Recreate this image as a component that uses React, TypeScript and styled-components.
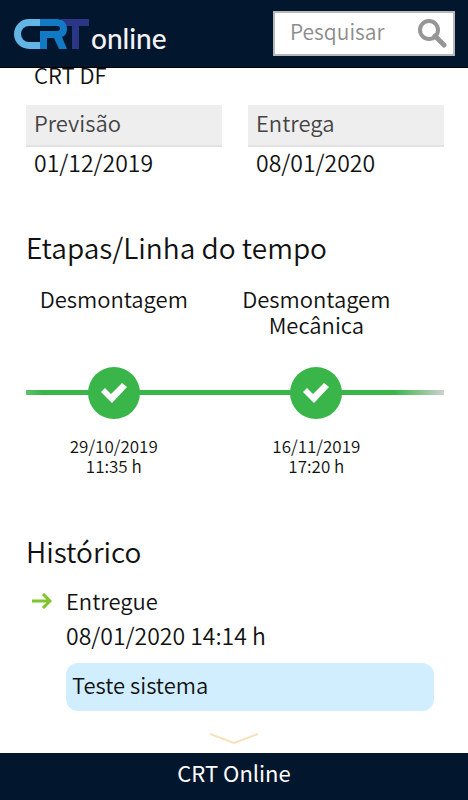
import styled, { createGlobalStyle } from 'styled-components'

const GlobalStyle = createGlobalStyle`
  * {
    box-sizing: border-box;
  }
  body {
    margin: 0;
    background: #fff;
    color: #111;
    font-family: 'Noto Sans CJK JP', 'Noto Sans', sans-serif;
    font-size: 22px;
    font-weight: 350;
  }
  h1, h2, h3, p, ol, ul, dl, dd {
    margin: 0;
    padding: 0;
    font-weight: inherit;
    list-style: none;
  }
`

const Page = styled.div`
  display: flex;
  flex-direction: column;
  min-height: 100vh;
`

const Header = styled.header`
  position: sticky;
  top: 0;
  z-index: 1;
  display: flex;
  align-items: center;
  justify-content: space-between;
  height: 68px;
  padding: 0 13px;
  background: #02162d;
  border-bottom: 1px solid #000;
`

const Brand = styled.a`
  display: flex;
  align-items: baseline;
  gap: 2px;
  padding-top: 6px;
  color: #f4f4f6;
  font-family: Lato, sans-serif;
  font-size: 28px;
  font-weight: 500;
  line-height: 34px;
  text-decoration: none;
`

const SearchBox = styled.form`
  display: flex;
  align-items: center;
  width: 182px;
  height: 45px;
  background: #fff;
  border: 2px solid #b8b8b8;
`

const SearchInput = styled.input`
  flex: 1;
  min-width: 0;
  height: 40px;
  padding: 0 0 6px 15px;
  border: 0;
  outline: 0;
  background: transparent;
  color: #444;
  font: inherit;
  font-size: 21px;

  &::placeholder {
    color: #8c8c8c;
    opacity: 1;
  }
`

const SearchButton = styled.button`
  display: flex;
  padding: 0 6px 2px 0;
  border: 0;
  background: transparent;
  cursor: pointer;
`

const Main = styled.main`
  flex: 1;
  padding: 0 24px 0 26px;
  overflow: hidden;
`

const Owner = styled.p`
  padding-left: 8px;
  line-height: 12px;
`

const Fields = styled.dl`
  display: grid;
  grid-template-columns: 1fr 1fr;
  gap: 26px;
  padding-top: 25px;
`

const FieldLabel = styled.dt`
  height: 42px;
  padding-left: 8px;
  background: #eee;
  border-bottom: 2px solid #e2e2e2;
  color: #444;
  line-height: 34px;
`

const FieldValue = styled.dd`
  padding-left: 8px;
  font-size: 23px;
  line-height: 30px;
`

const Section = styled.section`
  padding-top: 50px;
`

const SectionTitle = styled.h2`
  font-size: 28px;
  line-height: 40px;
`

const Timeline = styled.ol`
  display: grid;
  grid-template-columns: 42% 42%;
  grid-template-rows: auto auto auto;
  column-gap: 27px;
  padding: 18px 0 5px;
  text-align: center;
  background: linear-gradient(90deg, #5fc06c, #39b54a 4%, #39b54a 88%, #ccd2cd) 0 123px / 100% 5px no-repeat;
`

const Step = styled.li`
  display: grid;
  grid-row: span 3;
  grid-template-rows: subgrid;
  justify-items: center;
`

const StepName = styled.h3`
  font-size: 22px;
  line-height: 26px;
`

const StepMark = styled.span`
  display: flex;
  align-items: center;
  justify-content: center;
  width: 52px;
  height: 52px;
  margin: 30px 0 17px;
  border-radius: 50%;
  background: #39b54a;
`

const StepTime = styled.p`
  font-size: 17px;
  line-height: 20px;
`

const History = styled.ul`
  padding-top: 12px;
`

const HistoryItem = styled.li`
  display: flex;
  gap: 14px;
  padding: 0 10px 0 6px;
  line-height: 35px;
`

const ArrowSlot = styled.span`
  display: flex;
  align-items: center;
  height: 35px;
`

const HistoryBody = styled.div`
  flex: 1;
`

const HistoryDate = styled.p`
  font-size: 23px;
`

const Note = styled.p`
  height: 48px;
  margin-top: 10px;
  padding: 4px 6px;
  border-radius: 12px;
  background: #d0eeff;
`

const MoreButton = styled.button`
  align-self: center;
  display: flex;
  margin: 20px 0 8px;
  padding: 0;
  border: 0;
  background: transparent;
  cursor: pointer;
`

const Footer = styled.footer`
  height: 47px;
  background: #02162d;
  color: #fff;
  font-weight: 400;
  line-height: 38px;
  text-align: center;
`

const fields = [
  { label: 'Previsão', value: '01/12/2019' },
  { label: 'Entrega', value: '08/01/2020' },
]

const steps = [
  { name: 'Desmontagem', date: '29/10/2019', time: '11:35 h' },
  { name: 'Desmontagem Mecânica', date: '16/11/2019', time: '17:20 h' },
]

const history = [{ status: 'Entregue', when: '08/01/2020 14:14 h', note: 'Teste sistema' }]

const CrtMark = () => (
  <svg width="76" height="31" viewBox="0 0 76 31" aria-hidden="true">
    <path d="M28 1H16a15 15 0 0 0 0 30h12v-7H16a8 8 0 0 1 0-16h12z" fill="#62b5e5" />
    <path d="M48 1h28v7H66v23h-7V8H48z" fill="#2b3686" />
    <path d="M27 1h16c7 0 11 4 11 10 0 4-2 7-5 8l5 12h-8l-5-11h-7v11h-7V13h17c4 0 4-5 0-5H27z" fill="#1279c4" />
  </svg>
)

const SearchIcon = () => (
  <svg width="30" height="30" viewBox="0 0 30 30" fill="none" stroke="#969696" aria-hidden="true">
    <circle cx="12" cy="12" r="9" strokeWidth="4" />
    <path d="M18 18l9 9" strokeWidth="5" strokeLinecap="round" />
  </svg>
)

const CheckIcon = () => (
  <svg width="26" height="20" viewBox="0 0 26 20" aria-hidden="true">
    <path d="M0 9l4-4 6 6L21 0l5 4-15 16z" fill="#fff" />
  </svg>
)

const ArrowIcon = () => (
  <svg width="20" height="16" viewBox="0 0 20 16" fill="none" stroke="#7fc62b" strokeWidth="3" aria-hidden="true">
    <path d="M0 8h17M11 1l7 7-7 7" />
  </svg>
)

const ChevronIcon = () => (
  <svg width="48" height="12" viewBox="0 0 48 12" fill="none" stroke="#fbdfba" strokeWidth="2" aria-hidden="true">
    <path d="M0 1l24 9 24-9" />
  </svg>
)

export default function App() {
  return (
    <Page>
      <GlobalStyle />
      <Header>
        <Brand href="#" aria-label="CRT online">
          <CrtMark />
          online
        </Brand>
        <SearchBox role="search" onSubmit={(e) => e.preventDefault()}>
          <SearchInput type="text" placeholder="Pesquisar" aria-label="Pesquisar" />
          <SearchButton type="submit" aria-label="Buscar">
            <SearchIcon />
          </SearchButton>
        </SearchBox>
      </Header>

      <Main>
        <Owner>CRT DF</Owner>
        <Fields>
          {fields.map((field) => (
            <div key={field.label}>
              <FieldLabel>{field.label}</FieldLabel>
              <FieldValue>{field.value}</FieldValue>
            </div>
          ))}
        </Fields>

        <Section>
          <SectionTitle>Etapas/Linha do tempo</SectionTitle>
          <Timeline>
            {steps.map((step) => (
              <Step key={step.name}>
                <StepName>{step.name}</StepName>
                <StepMark>
                  <CheckIcon />
                </StepMark>
                <StepTime>
                  {step.date}
                  <br />
                  {step.time}
                </StepTime>
              </Step>
            ))}
          </Timeline>
        </Section>

        <Section>
          <SectionTitle>Histórico</SectionTitle>
          <History>
            {history.map((item) => (
              <HistoryItem key={item.when}>
                <ArrowSlot>
                  <ArrowIcon />
                </ArrowSlot>
                <HistoryBody>
                  <p>{item.status}</p>
                  <HistoryDate>{item.when}</HistoryDate>
                  <Note>{item.note}</Note>
                </HistoryBody>
              </HistoryItem>
            ))}
          </History>
        </Section>
      </Main>

      <MoreButton type="button" aria-label="Ver mais">
        <ChevronIcon />
      </MoreButton>
      <Footer>CRT Online</Footer>
    </Page>
  )
}
